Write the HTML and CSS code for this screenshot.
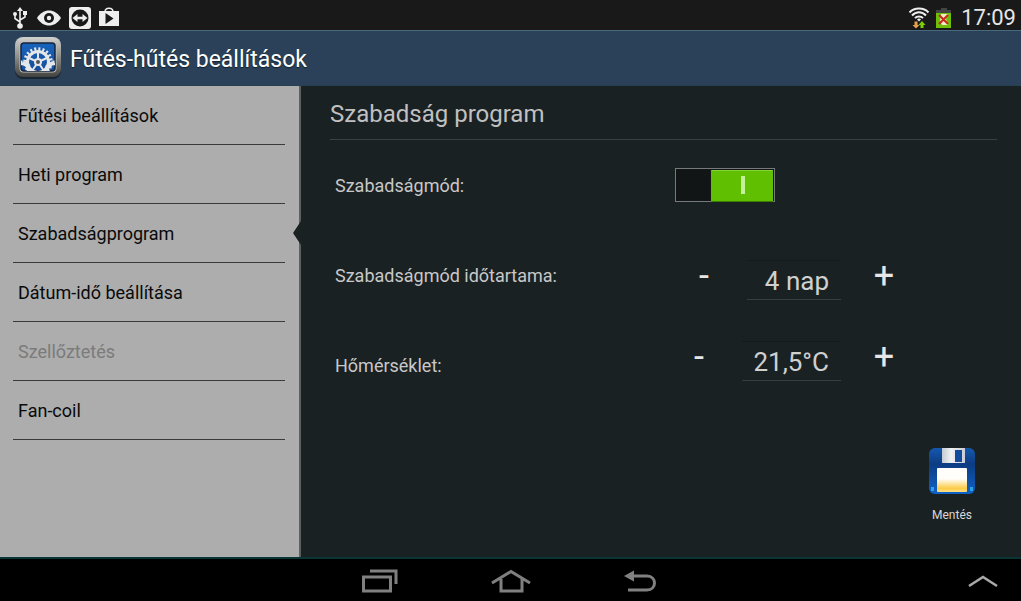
FILE: index.html
```html
<!DOCTYPE html>
<html lang="hu">
<head>
<meta charset="UTF-8" />
<meta name="viewport" content="width=device-width, initial-scale=1" />
<title>Fűtés-hűtés beállítások</title>
<link rel="stylesheet" href="styles.css">
</head>
<body>

<div class="statusbar">
  <div class="status-icons">
    <svg width="18" height="22" viewBox="0 0 18 22" fill="none" stroke="#eee" stroke-width="1.6">
      <path d="M9 3v15M9 15l-5-3.500V7M9 13l5-3V6" />
      <path d="M9 0l3 4H6z" fill="#eee" stroke="none" />
      <circle cx="9" cy="19" r="2.800" fill="#eee" stroke="none" />
      <circle cx="4" cy="7" r="2" fill="#eee" stroke="none" />
      <path d="M12 4h4v4h-4z" fill="#eee" stroke="none" />
    </svg>
    <svg width="24" height="22" viewBox="0 0 24 22">
      <path d="M0 11C6 1 18 1 24 11C18 21 6 21 0 11z" fill="#eee" />
      <circle cx="12" cy="11" r="5" fill="#191919" />
      <circle cx="12" cy="11" r="2.200" fill="#eee" />
    </svg>
    <svg width="22" height="22" viewBox="0 0 22 22">
      <rect width="22" height="22" rx="3" fill="#eee" />
      <circle cx="11" cy="11" r="8.500" fill="#191919" />
      <path d="M3.500 11l5-4v2.700h5V7l5 4-5 4v-2.700h-5V15z" fill="#eee" />
    </svg>
    <svg width="20" height="22" viewBox="0 0 20 22">
      <path d="M6 5c0-5 8-5 8 0" fill="none" stroke="#eee" stroke-width="1.500" />
      <path d="M0 4h20v15H0z" fill="#eee" />
      <path d="M6.500 6v11l8-5.500z" fill="#191919" />
    </svg>
  </div>
  <div class="status-right">
    <svg width="20" height="22" viewBox="0 0 20 22" fill="none">
      <path d="M0.500 5.500C5 0 15 0 19.500 5.500M3 8.500C7 4 13 4 17 8.500M6 11.200C8 9 12 9 14 11.200" stroke="#eee" stroke-width="2" />
      <path d="M8 12.500a3 3 0 0 1 4 0l-2 2z" fill="#eee" />
      <path d="M5.500 14.500h3V18H10.500L7 21.500 3.500 18h2z" fill="#e5a050" />
      <path d="M11.500 21V18H9.500L13 14l3.500 4h-2v3z" fill="#7bd000" />
    </svg>
    <svg width="16" height="22" viewBox="0 0 16 22">
      <path d="M5 1h6v2h4v4H0V3h5z" fill="#444" />
      <path d="M0 6h15v15H0z" fill="#6ebe0a" />
      <path d="M5 7h7l-2 5 2 6H6l-2-4z" fill="#f4edc4" />
      <path d="M3 8l9 9M12 8l-9 9" stroke="#c8281e" stroke-width="2" />
    </svg>
    <span class="clock">17:09</span>
  </div>
</div>

<header class="titlebar">
  <svg class="app-icon" width="48" height="42" viewBox="0 0 48 42">
    <defs>
      <linearGradient id="frame" x1="0" y1="0" x2="0" y2="1">
        <stop offset="0" stop-color="#d0d0ce" />
        <stop offset="0.500" stop-color="#8d8d89" />
        <stop offset="1" stop-color="#41423f" />
      </linearGradient>
      <linearGradient id="screen" x1="0" y1="0" x2="0" y2="1">
        <stop offset="0" stop-color="#1763bb" />
        <stop offset="1" stop-color="#174e9c" />
      </linearGradient>
      <clipPath id="screen-clip"><rect x="7" y="6" width="34" height="28" rx="3" /></clipPath>
    </defs>
    <rect x="1" y="1" width="46" height="41" rx="8" fill="#182632" />
    <rect x="1" y="0" width="46" height="40" rx="8" fill="url(#frame)" />
    <rect x="5.500" y="4.500" width="37" height="31" rx="4" fill="#bfc1be" />
    <rect x="7" y="6" width="34" height="28" rx="3" fill="url(#screen)" stroke="#17243b" stroke-width="1.500" />
    <g clip-path="url(#screen-clip)" fill="none" stroke="#e4e7e9">
      <circle cx="24" cy="25" r="13" stroke-width="3.500" stroke-dasharray="2 2.080" />
      <circle cx="24" cy="25" r="10.500" stroke-width="3" />
      <path d="M24 25V15M24 25l9-4M24 25l-9-4M24 25l6 9M24 25l-6 9" stroke-width="2" />
      <circle cx="8" cy="33" r="8" stroke-width="3" stroke-dasharray="2 2" />
      <circle cx="8" cy="33" r="6" stroke-width="2.500" />
      <circle cx="40" cy="33" r="8" stroke-width="3" stroke-dasharray="2 2" />
      <circle cx="40" cy="33" r="6" stroke-width="2.500" />
      <path d="M9 25l9 9M39 25l-9 9" stroke-width="2.500" />
      <circle cx="24" cy="25" r="3" fill="#555" stroke-width="2" />
    </g>
  </svg>
  <h1>Fűtés-hűtés beállítások</h1>
</header>

<div class="content">
  <nav class="sidebar">
    <button class="menu-item">Fűtési beállítások</button>
    <button class="menu-item">Heti program</button>
    <button class="menu-item active">Szabadságprogram</button>
    <button class="menu-item">Dátum-idő beállítása</button>
    <button class="menu-item" disabled>Szellőztetés</button>
    <button class="menu-item">Fan-coil</button>
  </nav>

  <main class="panel">
    <h2>Szabadság program</h2>
    <div class="settings">
      <div class="labels">
        <label for="mode">Szabadságmód:</label>
        <label for="days">Szabadságmód időtartama:</label>
        <label for="temp">Hőmérséklet:</label>
      </div>
      <div class="controls">
        <div class="switch-row">
          <input type="checkbox" class="switch" id="mode" checked>
        </div>
        <div class="stepper">
          <button class="step" id="days-minus">-</button>
          <input type="text" class="value" id="days" value="4 nap">
          <button class="step" id="days-plus">+</button>
        </div>
        <div class="stepper">
          <button class="step" id="temp-minus">-</button>
          <input type="text" class="value wide" id="temp" value="21,5°C">
          <button class="step" id="temp-plus">+</button>
        </div>
      </div>
    </div>
    <button class="save">
      <svg width="46" height="48" viewBox="0 0 46 48">
        <defs>
          <linearGradient id="disk" x1="0" y1="0" x2="0" y2="1">
            <stop offset="0" stop-color="#1558ae" />
            <stop offset="0.350" stop-color="#0c3c82" />
            <stop offset="1" stop-color="#0e62c8" />
          </linearGradient>
          <linearGradient id="paper" x1="0" y1="0" x2="0" y2="1">
            <stop offset="0.450" stop-color="#fffefa" />
            <stop offset="0.850" stop-color="#fbcb45" />
            <stop offset="1" stop-color="#fbe08a" />
          </linearGradient>
          <linearGradient id="shutter">
            <stop offset="0" stop-color="#c4cad2" />
            <stop offset="0.400" stop-color="#f0f1f3" />
            <stop offset="1" stop-color="#c9ccd2" />
          </linearGradient>
        </defs>
        <rect y="1" width="46" height="46" rx="6" fill="url(#disk)" />
        <path d="M13 1h23v15H13z" fill="url(#shutter)" />
        <path d="M26 3h7v12h-7z" fill="#124b9b" />
        <rect x="8" y="21" width="30" height="24" rx="1" fill="url(#paper)" />
        <path d="M2 40h3v4H2zM41 40h3v4h-3z" fill="#2fa0e8" />
      </svg>
      <span>Mentés</span>
    </button>
  </main>
</div>

<footer class="navbar">
  <button class="nav-btn" aria-label="Legutóbbi">
    <svg width="36" height="24" viewBox="0 0 36 24" fill="none" stroke="#808080" stroke-width="3">
      <path d="M1.500 8h27v14h-27zM8 2h26v13" />
    </svg>
  </button>
  <button class="nav-btn" aria-label="Kezdőlap">
    <svg width="40" height="24" viewBox="0 0 40 24" fill="none" stroke="#808080" stroke-width="3">
      <path d="M1 14L20 2.500 39 14M10 10v12h21V10" />
    </svg>
  </button>
  <button class="nav-btn" aria-label="Vissza">
    <svg width="32" height="24" viewBox="0 0 32 24" fill="none" stroke="#808080" stroke-width="3">
      <path d="M8 7h15c10 0 10 14 0 14H4" />
      <path d="M0 7l10-5.500v11z" fill="#808080" stroke="none" />
    </svg>
  </button>
  <button class="nav-btn expand" aria-label="Megnyitás">
    <svg width="30" height="14" viewBox="0 0 30 14" fill="none" stroke="#aaa" stroke-width="2.500">
      <path d="M1 12L15 3l14 9" />
    </svg>
  </button>
</footer>

<script>
  const days = document.getElementById('days');
  const temp = document.getElementById('temp');

  function stepDays(n) {
    days.value = Math.max(1, parseInt(days.value) + n) + ' nap';
  }

  function stepTemp(n) {
    const t = parseFloat(temp.value.replace(',', '.')) + n;
    temp.value = t.toFixed(1).replace('.', ',') + '°C';
  }

  document.getElementById('days-minus').addEventListener('click', () => stepDays(-1));
  document.getElementById('days-plus').addEventListener('click', () => stepDays(1));
  document.getElementById('temp-minus').addEventListener('click', () => stepTemp(-0.5));
  document.getElementById('temp-plus').addEventListener('click', () => stepTemp(0.5));
</script>

</body>
</html>
```

FILE: styles.css
```css
* {
  box-sizing: border-box;
}

body {
  margin: 0;
  min-height: 100vh;
  display: flex;
  flex-direction: column;
  background: #1a2123;
  color: #c8c8c8;
  font-family: Roboto, "Liberation Sans", sans-serif;
}

button {
  background: none;
  border: none;
  padding: 0;
  color: inherit;
  font-family: inherit;
  cursor: pointer;
}

svg {
  display: block;
}

/* status bar */
.statusbar {
  display: flex;
  justify-content: space-between;
  align-items: center;
  height: 30px;
  padding: 6px 5px 0 11px;
  background: #191919;
}

.status-icons {
  display: flex;
  align-items: center;
  gap: 8px;
}

.status-right {
  display: flex;
  align-items: center;
  gap: 7px;
}

.clock {
  margin-left: 2px;
  color: #e6e6e6;
  font-size: 22px;
  line-height: 24px;
}

/* title bar */
.titlebar {
  display: flex;
  align-items: center;
  gap: 8px;
  height: 56px;
  padding-left: 14px;
  background: #2a4159;
  border-top: 1px solid #48697d;
  border-bottom: 1px solid #26404f;
}

.titlebar h1 {
  margin: 0;
  padding-top: 2px;
  color: #fff;
  font-size: 23px;
  font-weight: 400;
  text-shadow: 0 1px 1px #10202c;
}

.content {
  flex: 1;
  display: flex;
}

/* menu */
.sidebar {
  width: 301px;
  padding: 0 14px 0 13px;
  background: #adadad;
  border-right: 2px solid #5c6061;
}

.menu-item {
  display: block;
  position: relative;
  width: 100%;
  height: 59px;
  padding-left: 5px;
  border-bottom: 1px solid #3a3a3a;
  color: #0a0a0a;
  font-size: 18px;
  text-align: left;
}

.menu-item:disabled {
  color: #7b7b7b;
  cursor: default;
}

.menu-item.active::after {
  content: "";
  position: absolute;
  top: 17px;
  right: -16px;
  border: solid transparent;
  border-width: 12px 8px 12px 0;
  border-right-color: #1a2123;
}

/* settings panel */
.panel {
  flex: 1;
  display: flex;
  flex-direction: column;
  padding: 0 24px 0 29px;
}

.panel h2 {
  margin: 0;
  height: 54px;
  border-bottom: 1px solid #3b4143;
  color: #c0c0c0;
  font-size: 24px;
  font-weight: 400;
  line-height: 56px;
}

.settings {
  display: flex;
  padding-left: 5px;
}

.labels {
  width: 340px;
  padding-top: 1px;
}

.labels label {
  display: block;
  font-size: 18px;
  line-height: 90px;
}

.switch-row {
  height: 99px;
  padding-top: 28px;
}

.switch {
  appearance: none;
  display: block;
  position: relative;
  width: 100px;
  height: 34px;
  margin: 0;
  background: #111516;
  border: 1px solid #777a7c;
  cursor: pointer;
}

.switch::before {
  content: "";
  position: absolute;
  top: 1px;
  left: 1px;
  width: 62px;
  height: 30px;
  background: #555;
  border-radius: 1px;
}

.switch:checked::before {
  left: 35px;
  background: #5fbf00;
  border-top: 1px solid #84d634;
  border-bottom: 1px solid #3c7d00;
}

.switch:checked::after {
  content: "";
  position: absolute;
  top: 7px;
  left: 65px;
  width: 4px;
  height: 18px;
  background: #c4f29b;
}

.stepper {
  display: flex;
  justify-content: flex-end;
  align-items: center;
  gap: 19px;
  width: 233px;
  height: 81px;
}

.step {
  width: 48px;
  height: 48px;
  padding-bottom: 8px;
  color: #e6e6e6;
  font-size: 36px;
  line-height: 40px;
}

.value {
  width: 94px;
  height: 40px;
  padding: 2px 12px 0 0;
  background: none;
  border: none;
  border-top: 1px solid #14191b;
  border-bottom: 1px solid #383e40;
  color: #d0d0d0;
  font-family: inherit;
  font-size: 26px;
  text-align: right;
}

.value.wide {
  width: 99px;
}

.save {
  align-self: flex-end;
  display: flex;
  flex-direction: column;
  align-items: center;
  gap: 13px;
  width: 90px;
  margin-top: 36px;
  color: #d8d8d8;
  font-size: 12px;
  line-height: 14px;
}

/* system buttons */
.navbar {
  display: flex;
  justify-content: center;
  align-items: center;
  position: relative;
  gap: 93px;
  height: 44px;
  padding: 2px 3px 0 0;
  background: #000;
  border-top: 2px solid #0a3535;
}

.nav-btn.expand {
  position: absolute;
  right: 23px;
}
```
